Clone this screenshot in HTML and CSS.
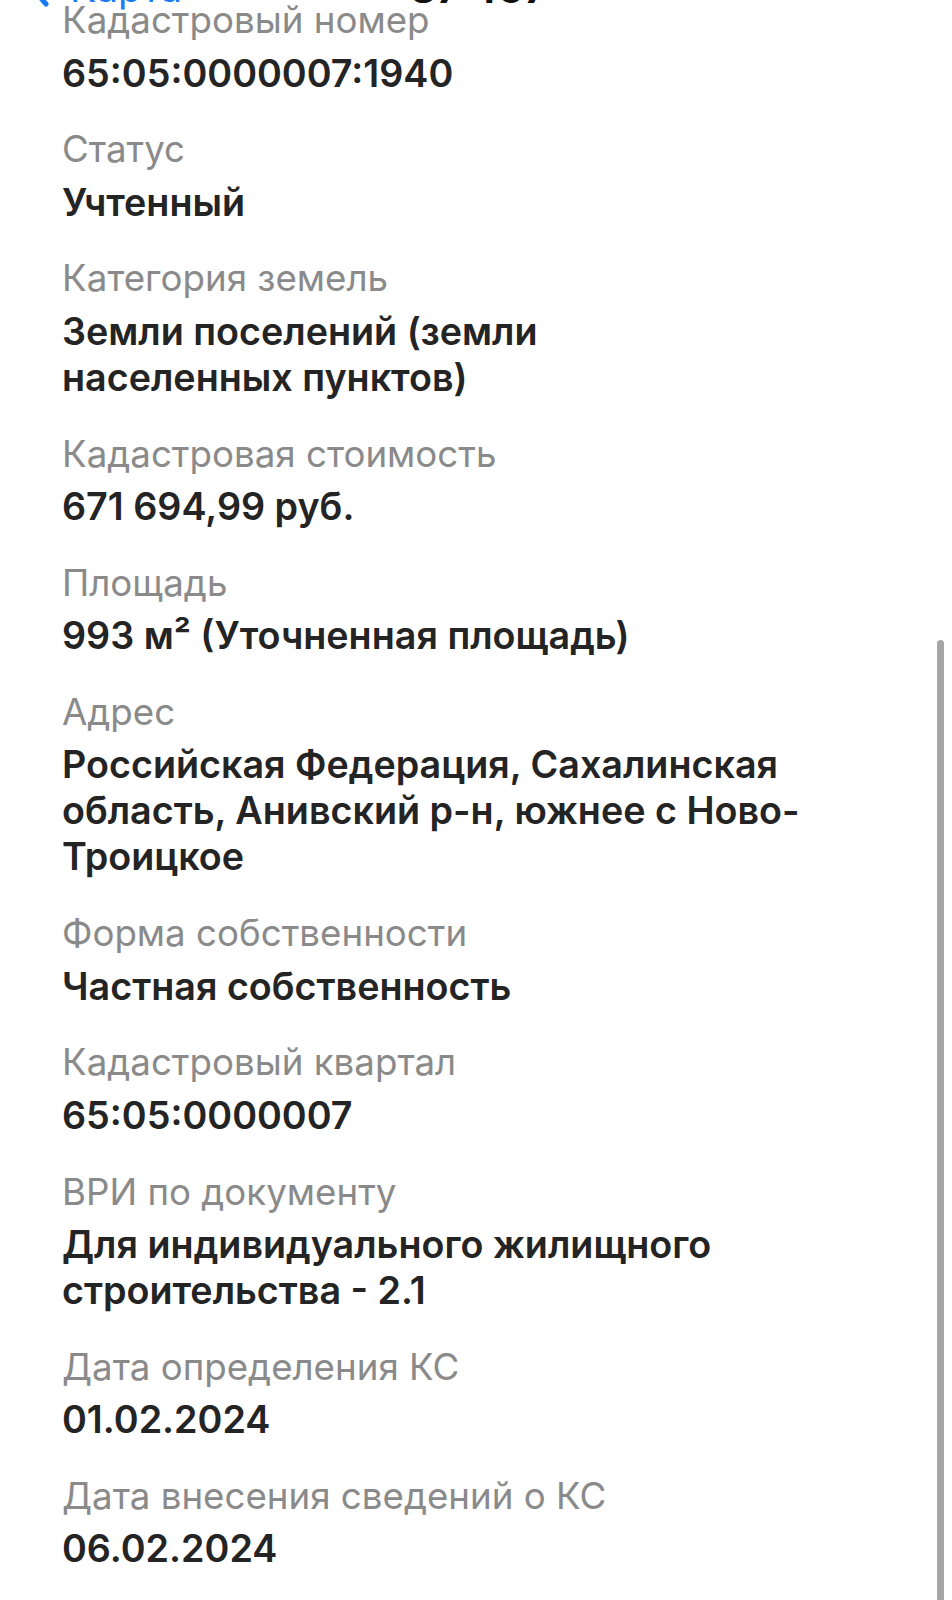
FILE: index.html
```html
<!DOCTYPE html>
<html lang="ru">
<head>
<meta charset="utf-8">
<link rel="stylesheet" href="styles.css">
</head>
<body>
<div class="nav">
  <div class="back">
    <svg class="chev" width="22" height="40" viewBox="0 0 22 40"><path d="M18 4 L4 20 L18 36" fill="none" stroke="#1a7cf5" stroke-width="5" stroke-linecap="round" stroke-linejoin="round"/></svg>
    <span class="back-text">Карта</span>
  </div>
  <div class="title">37 457</div>
</div>
<main class="list">
  <div class="item"><div class="label">Кадастровый номер</div><div class="value">65:05:0000007:1940</div></div>
  <div class="item"><div class="label">Статус</div><div class="value">Учтенный</div></div>
  <div class="item"><div class="label">Категория земель</div><div class="value">Земли поселений (земли<br>населенных пунктов)</div></div>
  <div class="item"><div class="label">Кадастровая стоимость</div><div class="value">671 694,99 руб.</div></div>
  <div class="item"><div class="label">Площадь</div><div class="value">993 м² (Уточненная площадь)</div></div>
  <div class="item"><div class="label">Адрес</div><div class="value">Российская Федерация, Сахалинская<br>область, Анивский р-н, южнее с Ново-<br>Троицкое</div></div>
  <div class="item"><div class="label">Форма собственности</div><div class="value">Частная собственность</div></div>
  <div class="item"><div class="label">Кадастровый квартал</div><div class="value">65:05:0000007</div></div>
  <div class="item"><div class="label">ВРИ по документу</div><div class="value">Для индивидуального жилищного<br>строительства - 2.1</div></div>
  <div class="item"><div class="label">Дата определения КС</div><div class="value">01.02.2024</div></div>
  <div class="item"><div class="label">Дата внесения сведений о КС</div><div class="value">06.02.2024</div></div>
</main>
<div class="scrollbar"></div>
</body>
</html>
```
FILE: styles.css
```css
html, body {
  margin: 0;
  padding: 0;
  background: #ffffff;
}
body {
  font-family: Inter, "Noto Sans", "Liberation Sans", sans-serif;
  width: 952px;
  height: 1600px;
  overflow: hidden;
  position: relative;
}
.nav {
  position: absolute;
  top: -32px;
  left: 0;
  width: 952px;
  height: 40px;
  display: flex;
  align-items: center;
}
.back {
  position: absolute;
  left: 28px;
  display: flex;
  align-items: center;
  gap: 20px;
}
.back-text {
  color: #1a7cf5;
  font-size: 39px;
  line-height: 40px;
}
.title {
  position: absolute;
  left: 410px;
  font-size: 41px;
  font-weight: 700;
  line-height: 40px;
  color: #111;
}
.list {
  padding: 0 0 0 62px;
  display: flex;
  flex-direction: column;
  gap: 28.7px;
  margin-top: -5px;
}
.label {
  color: #8a8a8a;
  font-size: 36.7px;
  line-height: 50px;
  margin-bottom: 4.5px;
}
.value {
  color: #242424;
  font-size: 37.7px;
  font-weight: 600;
  line-height: 46px;
}
.scrollbar {
  position: absolute;
  left: 937px;
  top: 640px;
  width: 7px;
  height: 980px;
  background: #a6a6a6;
  border-radius: 4px;
}
```
